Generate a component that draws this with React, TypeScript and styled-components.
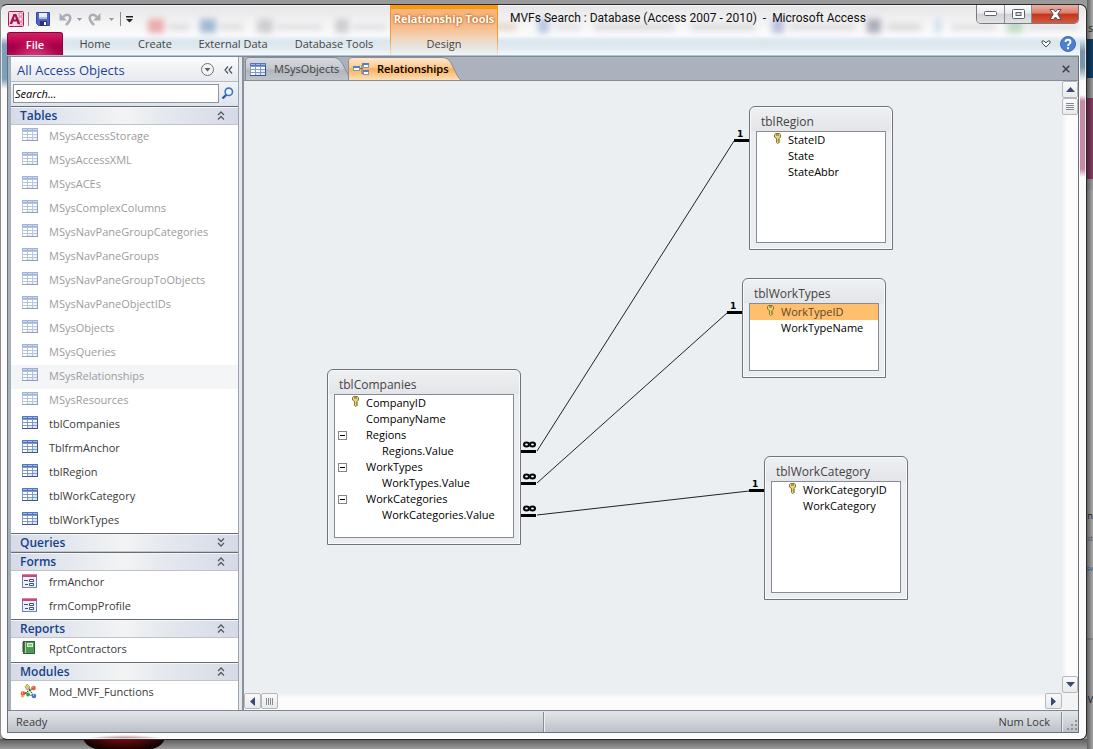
import React from "react";
import styled, { createGlobalStyle, css } from "styled-components";

const GlobalStyle = createGlobalStyle`
  * { box-sizing: border-box; }
  body {
    margin: 0;
    font-family: "Open Sans", "Noto Sans", sans-serif;
    font-size: 11px;
    line-height: 16px;
    color: #3b3b3b;
  }
  button {
    font: inherit;
    color: inherit;
    background: none;
    border: 0;
    padding: 0;
    margin: 0;
    text-align: left;
  }
  ul { list-style: none; margin: 0; padding: 0; }
  svg { display: block; flex: none; }
`;

/* ---------- desktop behind the window ---------- */

const Desktop = styled.div`
  position: relative;
  display: flex;
  min-height: 100vh;
  overflow: hidden;
  padding: 4px 6px 9px 0;
  background:
    linear-gradient(90deg, rgba(0, 0, 0, 0.45), rgba(0, 0, 0, 0.05)) right top / 6px 100% no-repeat,
    linear-gradient(180deg, #b4b4b4 0 39px, #0d426b 39px 78px, #a5a5a5 78px 98px, #8e4167 98px 179px,
      #a9a9a9 179px 190px, #b3b3b3 190px 638px, #979797 638px 640px, #aeaeae 640px) right top / 6px 100% no-repeat,
    linear-gradient(180deg, #5b5b5b, #9c9c9c) left bottom / 100% 10px no-repeat,
    #9a9a9a;
`;

const PeekText = styled.span<{ $top: number; $color: string; $size: number }>`
  position: absolute;
  right: 0;
  top: ${(p) => p.$top}px;
  white-space: nowrap;
  color: ${(p) => p.$color};
  font-size: ${(p) => p.$size}px;
`;

const PeekLogo = styled.div`
  position: absolute;
  left: 82px;
  bottom: 0;
  width: 84px;
  height: 16px;
  border-radius: 0 0 42px 42px;
  background: radial-gradient(ellipse at 50% 0, #c01217 0, #5d0709 40%, #160404 75%);
`;

/* ---------- window frame ---------- */

const Window = styled.div`
  position: relative;
  flex: 1;
  min-width: 0;
  display: flex;
  flex-direction: column;
  padding: 0 7px 6px 6px;
  border: 1px solid #2a2a2a;
  border-left-color: #8a8a8a;
  border-radius: 7px;
  background:
    linear-gradient(180deg, transparent 32px, #7ba0bb 40px 74px, transparent 84px) left top / 6px 100% no-repeat,
    linear-gradient(180deg, transparent 34px, #7796ae 46px 62px, transparent 76px, transparent 90px, #c789a8 96px 164px, transparent 172px) right top / 6px 100% no-repeat,
    radial-gradient(ellipse 44px 6px at 124px calc(100% + 2px), #8a2024, rgba(138, 32, 36, 0)),
    linear-gradient(180deg, #e6e6e8 0, #f6f6f7 20px, #fafbfc 30px, #dae6ed 36px, #dfe9ef 42px, #f4f8fa 50px, #fbfbfb 60px);
  box-shadow: inset 0 0 0 1px rgba(255, 255, 255, 0.7);
`;

const Haze = styled.svg`
  position: absolute;
  left: 0;
  top: 0;
  width: 100%;
  height: 50px;
  pointer-events: none;
`;

const Header = styled.header`
  position: relative;
  display: flex;
  height: 51px;
`;

const HeaderColumn = styled.div<{ $grow?: boolean }>`
  display: flex;
  flex-direction: column;
  width: ${(p) => (p.$grow ? "auto" : "383px")};
  flex: ${(p) => (p.$grow ? "1" : "none")};
`;

const QuickAccess = styled.div`
  display: flex;
  align-items: center;
  height: 27px;
  gap: 4px;
  padding: 1px 0 0 1px;
`;

const QuickButton = styled.button<{ $w: number }>`
  width: ${(p) => p.$w}px;
  display: flex;
  justify-content: center;
`;

const Divider = styled.span`
  width: 1px;
  height: 14px;
  background: #8b8b8f;
`;

const RibbonTabs = styled.nav`
  display: flex;
  height: 24px;
`;

const RibbonTab = styled.button<{ $w: number }>`
  width: ${(p) => p.$w}px;
  height: 24px;
  text-align: center;
  white-space: nowrap;
  color: #444;
`;

const FileTab = styled(RibbonTab)`
  color: #fff;
  font-weight: 600;
  border: 1px solid #91003c;
  border-bottom: 0;
  border-radius: 3px 3px 0 0;
  background: radial-gradient(ellipse at 50% 110%, #e03a7d 0, rgba(200, 20, 90, 0) 60%),
    linear-gradient(180deg, #cf2464 0, #b8004e 45%, #a20044 60%, #b80b54 100%);
`;

const ContextGroup = styled.div`
  display: flex;
  flex-direction: column;
  width: 108px;
  border: solid transparent;
  border-width: 4px 1px 0;
  border-image: linear-gradient(180deg, #ff9b00 0, #ec8f1b 10px, #eba250 36px, #f3e7dc 100%) 4 1 0 1;
  background: linear-gradient(180deg, #f5b377 0, #f7bd8b 18px, #f4d3b5 28px, #e4e5e2 38px, #f3f4f4 100%);
`;

const ContextTitle = styled.div`
  height: 23px;
  line-height: 20px;
  text-align: center;
  white-space: nowrap;
  color: #fff;
  font-size: 11px;
  font-weight: 700;
  text-shadow: 0 0 3px #b5520a, 0 0 2px #c4712c;
`;

const TitleRow = styled.div`
  display: flex;
  height: 27px;
  padding-left: 12px;
  justify-content: space-between;
`;

const WindowTitle = styled.h1`
  margin: 0;
  font-family: Roboto, "Open Sans", sans-serif;
  font-size: 12px;
  font-weight: 400;
  line-height: 26px;
  color: #111;
  white-space: pre;
`;

const WindowControls = styled.div`
  display: flex;
  height: 19px;
  border: 1px solid #777c82;
  border-top: 0;
  border-radius: 0 0 5px 5px;
  overflow: hidden;
`;

const ControlButton = styled.button<{ $close?: boolean }>`
  display: flex;
  align-items: center;
  justify-content: center;
  width: ${(p) => (p.$close ? 47 : 27)}px;
  background: ${(p) =>
    p.$close
      ? "linear-gradient(180deg, #e8b2a4 0, #d98070 45%, #c4351c 50%, #d5593c 100%)"
      : "linear-gradient(180deg, #fafafa 0, #ececee 45%, #d2d3d6 50%, #e2e2e4 100%)"};
  & + & { border-left: 1px solid #8c9096; }
`;

const HelpRow = styled.div`
  display: flex;
  align-items: center;
  justify-content: flex-end;
  gap: 9px;
  height: 24px;
  padding-right: 3px;
`;

/* ---------- client area ---------- */

const Client = styled.div`
  position: relative;
  flex: 1;
  display: flex;
  flex-direction: column;
  min-height: 0;
  border: 1px solid #6c7178;
  border-top-color: #7d8b99;
  box-shadow: 0 -1px 0 #a9c3d5;
`;

const Work = styled.div`
  flex: 1;
  display: flex;
  min-height: 0;
  padding-left: 3px;
  background: #a5b0bd;
`;

const NavPane = styled.aside`
  width: 228px;
  flex: none;
  display: flex;
  flex-direction: column;
  background: #fff;
  border-right: 1px solid #9aa3b0;
`;

const Splitter = styled.div`
  width: 5px;
  flex: none;
  background: linear-gradient(90deg, #e6eaf0 0 3px, #8b919c 3px);
`;

const NavHeader = styled.div`
  display: flex;
  align-items: center;
  height: 25px;
  padding: 1px 5px 0 6px;
  border-bottom: 1px solid #b4bac4;
  background: linear-gradient(180deg, #fcfcfd, #e6e9ef);
`;

const NavTitle = styled.h2`
  flex: 1;
  margin: 0;
  font-size: 13px;
  font-weight: 400;
  color: #1c4496;
`;

const NavTools = styled.div`
  display: flex;
  align-items: center;
  gap: 10px;
`;

const SearchRow = styled.form`
  display: flex;
  align-items: center;
  gap: 2px;
  height: 24px;
  padding: 0 4px 2px 2px;
  background: linear-gradient(180deg, #f1f3f7, #dfe3eb);
`;

const SearchBox = styled.input`
  flex: 1;
  min-width: 0;
  height: 19px;
  padding: 0 1px;
  border: 1px solid #8f959e;
  border-radius: 0;
  background: #fff;
  font: italic 11px/16px "Open Sans", "Noto Sans", sans-serif;
  color: #000;
  &::placeholder { color: #000; opacity: 1; }
`;

const GroupHeader = styled.button`
  display: flex;
  align-items: center;
  justify-content: space-between;
  width: 100%;
  height: 19px;
  padding: 0 13px 0 9px;
  border-top: 1px solid #676b72;
  border-bottom: 1px solid #c0c3c8;
  background: linear-gradient(90deg, #d6dbe8 0, #f2f4f4 50%, #e6e9ef 66%, #d5dae7 100%);
  box-shadow: inset 0 1px 0 #f4f6fa;
  color: #15428b;
  font-size: 12px;
  font-weight: 600;
`;

const NavItem = styled.button<{ $system?: boolean; $selected?: boolean }>`
  display: flex;
  align-items: flex-start;
  width: 100%;
  height: 24px;
  padding: 3px 0 0 11px;
  gap: 11px;
  white-space: nowrap;
  color: ${(p) => (p.$system ? "#9c9c9c" : "#3b3b3b")};
  ${(p) => p.$selected && css`background: #f4f5f7;`}
  svg { opacity: ${(p) => (p.$system ? 0.55 : 1)}; }
`;

const Documents = styled.main`
  flex: 1;
  min-width: 0;
  display: flex;
  flex-direction: column;
  background: #ebeff2;
`;

const TabStrip = styled.div`
  display: flex;
  align-items: flex-end;
  height: 24px;
  padding-left: 1px;
  border-bottom: 1px solid #868c96;
  background: #abb2be;
`;

const DocTab = styled.button<{ $active?: boolean; $w: number }>`
  position: relative;
  isolation: isolate;
  display: flex;
  align-items: center;
  gap: ${(p) => (p.$active ? 7 : 8)}px;
  width: ${(p) => p.$w}px;
  height: 23px;
  padding: 1px 0 0 5px;
  white-space: nowrap;
  color: ${(p) => (p.$active ? "#000" : "#3f3f3f")};
  font-weight: ${(p) => (p.$active ? 600 : 400)};
  ${(p) => p.$active && css`z-index: 1;`}
`;

const TabShape = styled.svg`
  position: absolute;
  left: 0;
  top: 0;
  z-index: -1;
`;

const CloseTab = styled.button`
  margin: 0 8px 7px auto;
`;

const CanvasArea = styled.div`
  flex: 1;
  min-height: 0;
  display: grid;
  grid-template-columns: 1fr 16px;
  grid-template-rows: 1fr 17px;
`;

const Canvas = styled.section`
  position: relative;
  overflow: hidden;
`;

const Scrollbar = styled.div<{ $horizontal?: boolean }>`
  display: flex;
  flex-direction: ${(p) => (p.$horizontal ? "row" : "column")};
  background: linear-gradient(${(p) => (p.$horizontal ? "180deg" : "90deg")}, #efefef 0, #fcfcfc 5px);
`;

const ScrollButton = styled.button<{ $end?: boolean; $horizontal?: boolean }>`
  display: flex;
  align-items: center;
  justify-content: center;
  width: ${(p) => (p.$horizontal ? 17 : 16)}px;
  height: ${(p) => (p.$horizontal ? 16 : 17)}px;
  border: 1px solid #b5b8bd;
  border-radius: 2px;
  background: linear-gradient(180deg, #fafafa, #e9eaec);
  ${(p) => p.$end && (p.$horizontal ? css`margin-left: auto;` : css`margin-top: auto;`)}
`;

const ScrollCorner = styled.div`
  background: #f4f4f4;
`;

const Links = styled.svg`
  position: absolute;
  left: 0;
  top: 0;
`;

const EntityBox = styled.article<{ $x: number; $y: number; $w: number; $h: number }>`
  position: absolute;
  left: ${(p) => p.$x}px;
  top: ${(p) => p.$y}px;
  width: ${(p) => p.$w}px;
  height: ${(p) => p.$h}px;
  display: flex;
  flex-direction: column;
  padding: 0 6px 6px;
  border: 1px solid #6d747b;
  border-radius: 6px 6px 0 0;
  background: linear-gradient(180deg, #eff0f2 0, #e4e5e8 24px, #ecedf1 25px);
  box-shadow: inset 0 0 0 1px #fafafb;
`;

const EntityTitle = styled.h3`
  margin: 0;
  padding: 5px 0 0 5px;
  height: 24px;
  line-height: 20px;
  font-size: 12px;
  font-weight: 400;
  color: #444;
`;

const FieldList = styled.ul`
  flex: 1;
  border: 1px solid #868c94;
  background: #fff;
`;

const Field = styled.li<{ $selected?: boolean; $nested?: boolean }>`
  display: flex;
  align-items: center;
  height: 16px;
  padding-right: 4px;
  white-space: nowrap;
  color: ${(p) => (p.$selected ? "#5b4630" : "#000")};
  background: ${(p) => (p.$selected ? "#ffbf6d" : "transparent")};
  ${(p) => p.$nested && css`padding-left: 16px;`}
`;

const FieldGutter = styled.span`
  display: flex;
  align-items: center;
  width: 31px;
  flex: none;
`;

const Toggle = styled.button`
  margin-left: 3px;
`;

const KeySlot = styled.span`
  margin-left: 17px;
  padding-bottom: 3px;
`;

const StatusBar = styled.footer`
  display: flex;
  align-items: center;
  height: 22px;
  border-top: 1px solid #7f8793;
  background: linear-gradient(180deg, #e2e5ea 0, #d2d6db 45%, #bcc1c7 100%);
`;

const StatusMessage = styled.span`
  width: 50%;
  padding-left: 8px;
`;

const StatusKeys = styled.span`
  flex: 1;
  padding-right: 11px;
  text-align: right;
`;

const StatusDivider = styled.span`
  width: 2px;
  height: 20px;
  background: linear-gradient(90deg, #868d96 0 1px, #eceef0 1px);
`;

/* ---------- icons ---------- */

const AccessLogo = () => (
  <svg width="16" height="16" viewBox="0 0 16 16">
    <rect x="0.5" y="0.5" width="15" height="15" rx="1" fill="#f6dbe6" stroke="#b3194f" />
    <path d="M11 2h3v3h-3zM11 6h3v4h-3zM11 11h3v3h-3z" fill="#fff" stroke="#d9799c" />
    <path d="M1.500 13L5.500 3h2.800l4 10H9.600l-.8-2.500H5L4.200 13zM5.800 8.500H8L6.900 5z" fill="#a8124b" />
  </svg>
);

const SaveIcon = () => (
  <svg width="14" height="14" viewBox="0 0 14 14">
    <path d="M0.500 0.500h13v13H2.500l-2-2z" fill="#4f63c9" stroke="#3548a6" />
    <rect x="3" y="1" width="8" height="6" fill="#e9eefb" />
    <rect x="3" y="5" width="8" height="2" fill="#a9bcea" />
    <rect x="4" y="9" width="7" height="5" fill="#27366f" />
    <rect x="8" y="10" width="2" height="3" fill="#fff" />
  </svg>
);

const UndoIcon = ({ flip }: { flip?: boolean }) => (
  <svg width="13" height="14" viewBox="0 0 13 14">
    <g transform={flip ? "matrix(-1 0 0 1 13 0)" : undefined} fill="none" stroke="#a9adb4" strokeWidth="2.500">
      <path d="M4 5C7 1.500 11.300 2.500 11.300 6c0 3-2 4.500-4.300 7" />
      <path d="M.5 1v7.500H8z" fill="#a9adb4" stroke="none" />
    </g>
  </svg>
);

const Caret = () => (
  <svg width="5" height="3" viewBox="0 0 5 3"><path d="M0 0h5L2.500 3z" fill="#95989d" /></svg>
);

const CustomizeIcon = () => (
  <svg width="7" height="7" viewBox="0 0 7 7">
    <path d="M0 0h7v1.500H0zM0 3h7L3.500 6.500z" fill="#222" />
  </svg>
);

const MinimizeIcon = () => (
  <svg width="13" height="6" viewBox="0 0 13 6">
    <rect x="0.500" y="0.500" width="12" height="4" rx="1" fill="#fff" stroke="#5b6073" />
  </svg>
);

const MaximizeIcon = () => (
  <svg width="13" height="11" viewBox="0 0 13 11">
    <rect x="0.500" y="0.500" width="12" height="9" rx="1" fill="#fff" stroke="#5b6073" />
    <rect x="4" y="3.500" width="5" height="3" fill="#d8dade" stroke="#5b6073" />
  </svg>
);

const CloseWindowIcon = () => (
  <svg width="13" height="11" viewBox="0 0 13 11">
    <path d="M1 .5h3.500L6.500 3 8.500.5H12L8.800 5.200 12 10.500H8.500l-2-2.500-2 2.500H1l3.200-5.300z" fill="#fff" stroke="#574a55" />
  </svg>
);

const RibbonToggleIcon = () => (
  <svg width="10" height="8" viewBox="0 0 10 8">
    <path d="M1 1h2l2 2 2-2h2v2L5 7 1 3z" fill="#fff" stroke="#4a4f57" />
  </svg>
);

const HelpIcon = () => (
  <svg width="16" height="16" viewBox="0 0 16 16">
    <circle cx="8" cy="8" r="7.500" fill="#4d80d2" stroke="#3f68b0" />
    <path d="M5.500 6C5.500 3 10.500 3 10.500 6c0 2-2.500 1.800-2.500 4" fill="none" stroke="#fff" strokeWidth="1.800" />
    <rect x="7" y="11.200" width="2" height="2" fill="#fff" />
  </svg>
);

const DropIcon = () => (
  <svg width="13" height="13" viewBox="0 0 13 13">
    <circle cx="6.500" cy="6.500" r="6" fill="#f4f4f6" stroke="#6e737b" />
    <path d="M3.500 5h6l-3 3.500z" fill="#5a5f68" />
  </svg>
);

const CollapseIcon = () => (
  <svg width="9" height="8" viewBox="0 0 9 8">
    <path d="M4 .5L1 4l3 3.500M8 .5L5 4l3 3.500" fill="none" stroke="#50555e" strokeWidth="1.200" />
  </svg>
);

const SearchIcon = () => (
  <svg width="13" height="13" viewBox="0 0 13 13">
    <path d="M5.500 7.500L1.500 11.500" stroke="#2a5fa8" strokeWidth="2.400" />
    <circle cx="7.800" cy="4.800" r="3.700" fill="#eef6fd" stroke="#3b78c4" strokeWidth="1.600" />
  </svg>
);

const Chevrons = ({ down }: { down?: boolean }) => (
  <svg width="8" height="9" viewBox="0 0 8 9">
    <path
      d={down ? "M1 .5L4 3.500 7 .5M1 5L4 8 7 5" : "M1 4L4 1 7 4M1 8.500L4 5.500 7 8.500"}
      fill="none" stroke="#555a62" strokeWidth="1.300"
    />
  </svg>
);

const TableIcon = () => (
  <svg width="16" height="13" viewBox="0 0 16 13">
    <rect width="16" height="13" fill="#7f9ac4" />
    <path d="M0 12h16v1H0zM15 3h1v10h-1z" fill="#3c5685" />
    <rect width="16" height="3" fill="#5577bb" />
    <g fill="#fff">
      <path d="M1 4h4v2H1zM6 4h4v2H6zM11 4h4v2h-4z" />
      <path d="M1 7h4v2H1zM6 7h4v2H6z" />
      <path d="M1 10h4v2H1z" />
    </g>
    <path d="M11 7h4v2h-4zM6 10h4v2H6zM11 10h4v2h-4z" fill="#dbe6f7" />
    <path d="M1 1h4v1H1zM6 1h4v1H6zM11 1h4v1h-4z" fill="#9db7e6" />
  </svg>
);

const FormIcon = () => (
  <svg width="16" height="14" viewBox="0 0 16 14">
    <rect x="0.500" y="0.500" width="14" height="13" fill="#e9effb" stroke="#6f83b2" />
    <rect width="15" height="3" fill="#c04a78" />
    <rect y="0" width="15" height="1" fill="#e07fa2" />
    <path d="M2 6.500h4M3 10.500h3" stroke="#3f4f7d" />
    <path d="M7.500 5.500h4v2h-4zM7.500 9.500h4v2h-4z" fill="#fff" stroke="#3f4f7d" />
  </svg>
);

const ReportIcon = () => (
  <svg width="16" height="14" viewBox="0 0 16 14">
    <rect x="1.500" y="0.500" width="11" height="12" fill="#4f9a52" stroke="#2c6633" />
    <rect x="5.500" y="2.500" width="5" height="3" fill="#8cc98b" stroke="#d5edd2" />
    <path d="M0 2h3M0 4h3M0 6h3M0 8h3M0 10h3" stroke="#444" strokeWidth="1" />
    <path d="M3.500 1v11" stroke="#a7d6a5" />
  </svg>
);

const ModuleIcon = () => (
  <svg width="16" height="15" viewBox="2 0 16 15" overflow="visible">
    <path d="M8 3l5 8M4 10l9-6M5 9l8 3" stroke="#333b47" strokeDasharray="1 1" strokeWidth="1.500" />
    <path d="M7 0l3 3-3 3-2-3z" fill="#d9cf6a" stroke="#8f8530" strokeWidth="0.600" />
    <circle cx="13.500" cy="4" r="2.300" fill="#dd5b35" />
    <circle cx="3" cy="9.500" r="2.300" fill="#e2582c" />
    <circle cx="2.500" cy="12" r="1.500" fill="#f2a13a" />
    <circle cx="8" cy="10.500" r="1.900" fill="#3f9c46" />
    <circle cx="14" cy="12" r="2.300" fill="#3c78d8" />
    <path d="M12.500 3h1M2 9h1M13 11h1" stroke="#fff" />
  </svg>
);

const RelationIcon = () => (
  <svg width="17" height="14" viewBox="0 0 17 14">
    <path d="M6 6.500h3V3h2M9 6v5.500h2" fill="none" stroke="#5f6d84" />
    <rect x="0.500" y="4.500" width="6" height="4" fill="#fff" stroke="#8b97ae" />
    <rect y="4" width="7" height="2" fill="#4f7edb" />
    <rect x="10.500" y="1.500" width="5" height="4" fill="#fff" stroke="#8b97ae" />
    <rect x="9" y="1" width="7" height="2" fill="#4f7edb" />
    <rect x="10.500" y="8.500" width="5" height="4" fill="#fff" stroke="#8b97ae" />
    <rect x="10" y="8" width="6" height="2" fill="#4f7edb" />
  </svg>
);

const CloseTabIcon = () => (
  <svg width="8" height="8" viewBox="0 0 8 8">
    <path d="M.7.7l6.600 6.600M7.300.7L.7 7.300" stroke="#3c4046" strokeWidth="1.500" />
  </svg>
);

const KeyIcon = () => (
  <svg width="7" height="11" viewBox="0 0 7 11">
    <path d="M1.500.5h4l1 1v2.500l-1.500 1.500v4l-1 1h-.5l-1-1v-4L.5 4V1.500z" fill="#e6d672" stroke="#85733a" />
    <path d="M2 2h3M4.500 7h1M4.500 9h1" stroke="#6b5a22" />
  </svg>
);

const ToggleIcon = () => (
  <svg width="9" height="9" viewBox="0 0 9 9">
    <rect x="0.500" y="0.500" width="8" height="8" fill="#fff" stroke="#868686" />
    <path d="M2 4.500h5" stroke="#000" />
  </svg>
);

const Arrow = ({ dir }: { dir: "up" | "down" | "left" | "right" }) => {
  const turn = { up: 0, right: 90, down: 180, left: 270 }[dir];
  return (
    <svg width="9" height="9" viewBox="0 0 9 9">
      <path d="M0 7L4.500 2 9 7z" fill="#3a4a72" transform={`rotate(${turn} 4.500 4.500)`} />
    </svg>
  );
};

const Grip = ({ vertical }: { vertical?: boolean }) => (
  <svg width="9" height="9" viewBox="0 0 9 9">
    <path
      d={vertical ? "M1.500 1v7M3.500 1v7M5.500 1v7M7.500 1v7" : "M0 1.500h8M0 3.500h8M0 5.500h8M0 7.500h8"}
      stroke="#85888d"
    />
  </svg>
);

const ResizeGrip = () => (
  <svg width="15" height="20" viewBox="0 0 15 20">
    <path d="M12 8h2v2h-2zM8 12h2v2H8zM12 12h2v2h-2zM4 16h2v2H4zM8 16h2v2H8zM12 16h2v2h-2z" fill="#8b939d" />
  </svg>
);

/* ---------- data ---------- */

type Kind = "table" | "form" | "report" | "module";
interface NavEntry { name: string; system?: boolean; selected?: boolean }
interface NavGroupData { title: string; kind: Kind; closed?: boolean; items: NavEntry[] }

const system = (name: string, selected = false): NavEntry => ({ name, system: true, selected });

const groups: NavGroupData[] = [
  {
    title: "Tables",
    kind: "table",
    items: [
      system("MSysAccessStorage"), system("MSysAccessXML"), system("MSysACEs"),
      system("MSysComplexColumns"), system("MSysNavPaneGroupCategories"),
      system("MSysNavPaneGroups"), system("MSysNavPaneGroupToObjects"),
      system("MSysNavPaneObjectIDs"), system("MSysObjects"), system("MSysQueries"),
      system("MSysRelationships", true), system("MSysResources"),
      { name: "tblCompanies" }, { name: "TblfrmAnchor" }, { name: "tblRegion" },
      { name: "tblWorkCategory" }, { name: "tblWorkTypes" },
    ],
  },
  { title: "Queries", kind: "table", closed: true, items: [] },
  { title: "Forms", kind: "form", items: [{ name: "frmAnchor" }, { name: "frmCompProfile" }] },
  { title: "Reports", kind: "report", items: [{ name: "RptContractors" }] },
  { title: "Modules", kind: "module", items: [{ name: "Mod_MVF_Functions" }] },
];

const icons: Record<Kind, () => React.JSX.Element> = {
  table: TableIcon, form: FormIcon, report: ReportIcon, module: ModuleIcon,
};

interface FieldData { name: string; isKey?: boolean; multi?: boolean; nested?: boolean; selected?: boolean }
interface EntityData { name: string; x: number; y: number; w: number; h: number; fields: FieldData[] }

const entities: EntityData[] = [
  {
    name: "tblCompanies", x: 83, y: 288, w: 194, h: 176,
    fields: [
      { name: "CompanyID", isKey: true }, { name: "CompanyName" },
      { name: "Regions", multi: true }, { name: "Regions.Value", nested: true },
      { name: "WorkTypes", multi: true }, { name: "WorkTypes.Value", nested: true },
      { name: "WorkCategories", multi: true }, { name: "WorkCategories.Value", nested: true },
    ],
  },
  {
    name: "tblRegion", x: 505, y: 25, w: 144, h: 144,
    fields: [{ name: "StateID", isKey: true }, { name: "State" }, { name: "StateAbbr" }],
  },
  {
    name: "tblWorkTypes", x: 498, y: 197, w: 144, h: 100,
    fields: [{ name: "WorkTypeID", isKey: true, selected: true }, { name: "WorkTypeName" }],
  },
  {
    name: "tblWorkCategory", x: 520, y: 375, w: 144, h: 144,
    fields: [{ name: "WorkCategoryID", isKey: true }, { name: "WorkCategory" }],
  },
];

const links = [
  { from: [277, 370], to: [505, 60] },
  { from: [277, 402], to: [498, 232] },
  { from: [277, 434], to: [520, 410] },
];

const ghosts = [
  { x: 147, c: "#e58a8a", w: 16 }, { x: 167, c: "#cfcfd2", w: 22 }, { x: 199, c: "#7d9fc4", w: 16 },
  { x: 218, c: "#d0d0d3", w: 24 }, { x: 256, c: "#bdbdc0", w: 16 }, { x: 275, c: "#d6d6d9", w: 46 },
  { x: 334, c: "#bdbdc0", w: 14 }, { x: 352, c: "#d6d6d9", w: 34 }, { x: 403, c: "#f08a55", w: 16 },
  { x: 424, c: "#e0b590", w: 26 }, { x: 462, c: "#a79a95", w: 10 }, { x: 476, c: "#dcc2ac", w: 40 },
  { x: 537, c: "#9bb0dc", w: 11 }, { x: 553, c: "#d8d8dc", w: 26 }, { x: 593, c: "#cbcbce", w: 80 },
  { x: 690, c: "#cbcbce", w: 64 }, { x: 771, c: "#9fa5d4", w: 12 }, { x: 788, c: "#d0d0d3", w: 66 },
  { x: 866, c: "#8d8da0", w: 14 }, { x: 886, c: "#c6c6c9", w: 34 }, { x: 934, c: "#b8d4e6", w: 6 },
  { x: 950, c: "#d6d6d9", w: 44 }, { x: 1006, c: "#a5cfae", w: 16 }, { x: 1026, c: "#d6d6d9", w: 52 },
];

/* ---------- composite parts ---------- */

const NavGroup = ({ group }: { group: NavGroupData }) => {
  const Icon = icons[group.kind];
  return (
    <section>
      <GroupHeader type="button" aria-expanded={!group.closed}>
        {group.title}
        <Chevrons down={group.closed} />
      </GroupHeader>
      <ul>
        {group.items.map((item) => (
          <li key={item.name}>
            <NavItem type="button" $system={item.system} $selected={item.selected}>
              <Icon />
              {item.name}
            </NavItem>
          </li>
        ))}
      </ul>
    </section>
  );
};

const Entity = ({ entity }: { entity: EntityData }) => (
  <EntityBox $x={entity.x} $y={entity.y} $w={entity.w} $h={entity.h}>
    <EntityTitle>{entity.name}</EntityTitle>
    <FieldList>
      {entity.fields.map((f) => (
        <Field key={f.name} $selected={f.selected} $nested={f.nested}>
          <FieldGutter>
            {f.multi && <Toggle type="button" aria-label={`Collapse ${f.name}`}><ToggleIcon /></Toggle>}
            {f.isKey && <KeySlot><KeyIcon /></KeySlot>}
          </FieldGutter>
          {f.name}
        </Field>
      ))}
    </FieldList>
  </EntityBox>
);

const LinkLayer = () => (
  <Links width="819" height="612">
    {links.map(({ from: [x1, y1], to: [x2, y2] }) => (
      <g key={y1}>
        <path d={`M${x1 + 16} ${y1}L${x2 - 15} ${y2}`} stroke="#222" fill="none" />
        <path d={`M${x1} ${y1 + 0.5}h15M${x2 - 15} ${y2 - 0.5}h15`} stroke="#000" strokeWidth="3" />
        <g fill="none" stroke="#000" strokeWidth="2">
          <ellipse cx={x1 + 5.5} cy={y1 - 6.5} rx="2.500" ry="2" />
          <ellipse cx={x1 + 11.5} cy={y1 - 6.5} rx="2.500" ry="2" />
        </g>
        <text x={x2 - 12} y={y2 - 4} fontFamily="DejaVu Sans, sans-serif" fontWeight="700" fontSize="9">1</text>
      </g>
    ))}
  </Links>
);

export default function App() {
  return (
    <>
      <GlobalStyle />
      <Desktop>
        <PeekText $top={20} $color="#222" $size={10}>s</PeekText>
        <PeekText $top={508} $color="#111" $size={9}>n</PeekText>
        <PeekText $top={531} $color="#555" $size={7}>st</PeekText>
        <PeekText $top={561} $color="#27508a" $size={7}>sv</PeekText>
        <PeekText $top={692} $color="#111" $size={9}>V</PeekText>
        <PeekLogo />
        <Window>
          <Haze aria-hidden="true">
            <defs>
              <filter id="soft" x="-50%" y="-100%" width="200%" height="300%"><feGaussianBlur stdDeviation="3" /></filter>
            </defs>
            <g filter="url(#soft)" opacity="0.7">
              {ghosts.map((g) => (
                <rect key={g.x} x={g.x} y={g.w > 16 ? 19 : 14} width={g.w} height={g.w > 16 ? 6 : 14} fill={g.c} />
              ))}
            </g>
          </Haze>
          <Header>
            <HeaderColumn>
              <QuickAccess>
                <QuickButton type="button" $w={16} aria-label="Access menu"><AccessLogo /></QuickButton>
                <Divider />
                <QuickButton type="button" $w={20} aria-label="Save"><SaveIcon /></QuickButton>
                <QuickButton type="button" $w={16} aria-label="Undo"><UndoIcon /></QuickButton>
                <QuickButton type="button" $w={5} aria-label="Undo list"><Caret /></QuickButton>
                <QuickButton type="button" $w={17} aria-label="Redo"><UndoIcon flip /></QuickButton>
                <QuickButton type="button" $w={9} aria-label="Redo list"><Caret /></QuickButton>
                <Divider />
                <QuickButton type="button" $w={9} aria-label="Customize toolbar"><CustomizeIcon /></QuickButton>
              </QuickAccess>
              <RibbonTabs aria-label="Ribbon">
                <FileTab type="button" $w={56}>File</FileTab>
                <RibbonTab type="button" $w={64}>Home</RibbonTab>
                <RibbonTab type="button" $w={56}>Create</RibbonTab>
                <RibbonTab type="button" $w={100}>External Data</RibbonTab>
                <RibbonTab type="button" $w={102}>Database Tools</RibbonTab>
              </RibbonTabs>
            </HeaderColumn>
            <ContextGroup>
              <ContextTitle>Relationship Tools</ContextTitle>
              <RibbonTab type="button" $w={106}>Design</RibbonTab>
            </ContextGroup>
            <HeaderColumn $grow>
              <TitleRow>
                <WindowTitle>MVFs Search : Database (Access 2007 - 2010)  -  Microsoft Access</WindowTitle>
                <WindowControls>
                  <ControlButton type="button" aria-label="Minimize"><MinimizeIcon /></ControlButton>
                  <ControlButton type="button" aria-label="Maximize"><MaximizeIcon /></ControlButton>
                  <ControlButton type="button" aria-label="Close" $close><CloseWindowIcon /></ControlButton>
                </WindowControls>
              </TitleRow>
              <HelpRow>
                <button type="button" aria-label="Minimize the ribbon"><RibbonToggleIcon /></button>
                <button type="button" aria-label="Help"><HelpIcon /></button>
              </HelpRow>
            </HeaderColumn>
          </Header>
          <Client>
            <Work>
              <NavPane>
                <NavHeader>
                  <NavTitle>All Access Objects</NavTitle>
                  <NavTools>
                    <button type="button" aria-label="Navigation options"><DropIcon /></button>
                    <button type="button" aria-label="Shutter bar"><CollapseIcon /></button>
                  </NavTools>
                </NavHeader>
                <SearchRow role="search">
                  <SearchBox type="text" aria-label="Search" placeholder="Search..." />
                  <button type="button" aria-label="Run search"><SearchIcon /></button>
                </SearchRow>
                {groups.map((g) => <NavGroup key={g.title} group={g} />)}
              </NavPane>
              <Splitter />
              <Documents>
                <TabStrip role="tablist">
                  <DocTab type="button" role="tab" aria-selected="false" $w={103}>
                    <TabShape width="112" height="23" viewBox="0 0 112 23">
                      <defs>
                        <linearGradient id="idle" x2="0" y2="1">
                          <stop offset="0" stopColor="#d9dbdf" /><stop offset="0.500" stopColor="#c4c8ce" />
                          <stop offset="0.550" stopColor="#b0b5bd" /><stop offset="1" stopColor="#c0c4ca" />
                        </linearGradient>
                      </defs>
                      <path d="M.5 23V4Q.5 .5 4 .5H88Q94 .5 97 6L106 23" fill="url(#idle)" stroke="#868c96" />
                    </TabShape>
                    <TableIcon />
                    MSysObjects
                  </DocTab>
                  <DocTab type="button" role="tab" aria-selected="true" $active $w={114}>
                    <TabShape width="114" height="23" viewBox="0 0 114 23">
                      <defs>
                        <linearGradient id="live" x2="0" y2="1">
                          <stop offset="0" stopColor="#fde9d3" /><stop offset="0.450" stopColor="#fcc98e" />
                          <stop offset="0.500" stopColor="#fbb055" /><stop offset="1" stopColor="#fbdfba" />
                        </linearGradient>
                      </defs>
                      <path d="M.5 23V4Q.5 .5 4 .5H94Q100 .5 103 6L109 18Q111 22 113 23" fill="url(#live)" stroke="#8c8f95" />
                    </TabShape>
                    <RelationIcon />
                    Relationships
                  </DocTab>
                  <CloseTab type="button" aria-label="Close tab"><CloseTabIcon /></CloseTab>
                </TabStrip>
                <CanvasArea>
                  <Canvas aria-label="Relationships">
                    <LinkLayer />
                    {entities.map((e) => <Entity key={e.name} entity={e} />)}
                  </Canvas>
                  <Scrollbar>
                    <ScrollButton type="button" aria-label="Scroll up"><Arrow dir="up" /></ScrollButton>
                    <ScrollButton type="button" aria-label="Vertical thumb"><Grip /></ScrollButton>
                    <ScrollButton type="button" aria-label="Scroll down" $end><Arrow dir="down" /></ScrollButton>
                  </Scrollbar>
                  <Scrollbar $horizontal>
                    <ScrollButton type="button" aria-label="Scroll left" $horizontal><Arrow dir="left" /></ScrollButton>
                    <ScrollButton type="button" aria-label="Horizontal thumb" $horizontal><Grip vertical /></ScrollButton>
                    <ScrollButton type="button" aria-label="Scroll right" $horizontal $end><Arrow dir="right" /></ScrollButton>
                  </Scrollbar>
                  <ScrollCorner />
                </CanvasArea>
              </Documents>
            </Work>
            <StatusBar>
              <StatusMessage>Ready</StatusMessage>
              <StatusDivider />
              <StatusKeys>Num Lock</StatusKeys>
              <StatusDivider />
              <ResizeGrip />
            </StatusBar>
          </Client>
        </Window>
      </Desktop>
    </>
  );
}
